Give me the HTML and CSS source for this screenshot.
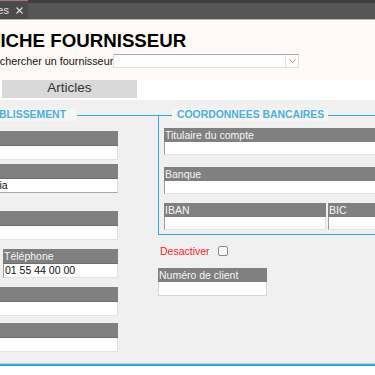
FILE: index.html
```html
<!DOCTYPE html>
<html lang="fr">
<head>
  <meta charset="UTF-8" />
  <title>Fiche fournisseur</title>
  <link rel="stylesheet" href="styles.css">
</head>
<body>

<div class="screen">
  <div class="tabbar">
    <div class="tab">
      <span class="tab-title">Fiches</span>
      <svg class="tab-close" width="7" height="7" viewBox="0 0 7 7"><path d="M0.5 0.5L6.5 6.5M6.5 0.5L0.5 6.5" stroke="#dcdcdc" stroke-width="1.2"/></svg>
    </div>
  </div>

  <div class="page">
    <header class="head">
      <h1>FICHE FOURNISSEUR</h1>
      <div class="search">
        <label for="supplier">Rechercher un fournisseur</label>
        <div class="select" id="supplier">
          <span class="select-arrow">
            <svg width="7" height="4" viewBox="0 0 7 4"><path d="M0.5 0.5L3.5 3.5L6.5 0.5" fill="none" stroke="#999" stroke-width="1"/></svg>
          </span>
        </div>
      </div>
    </header>

    <div class="tabs">
      <button class="tab-button">Articles</button>
    </div>

    <section class="panel">
      <fieldset class="box box-main">
        <legend>ETABLISSEMENT</legend>

        <div class="field">
          <div class="field-label">Code</div>
          <div class="field-input"></div>
        </div>
        <div class="field tight">
          <div class="field-label">Nom</div>
          <div class="field-input underline">SAS Groupe Nova Industria</div>
        </div>
        <div class="field spaced">
          <div class="field-label">Adresse</div>
          <div class="field-input"></div>
        </div>
        <div class="field split">
          <div>
            <div class="field-label">Fax</div>
            <div class="field-input"></div>
          </div>
          <div>
            <div class="field-label">Téléphone</div>
            <div class="field-input">01 55 44 00 00</div>
          </div>
        </div>
        <div class="field">
          <div class="field-label">Mail</div>
          <div class="field-input"></div>
        </div>
        <div class="field near">
          <div class="field-label">Site</div>
          <div class="field-input"></div>
        </div>
      </fieldset>

      <div class="side">
        <fieldset class="box box-bank">
          <legend>COORDONNEES BANCAIRES</legend>

          <div class="field">
            <div class="field-label">Titulaire du compte</div>
            <div class="field-input"></div>
          </div>
          <div class="field">
            <div class="field-label">Banque</div>
            <div class="field-input"></div>
          </div>
          <div class="field split">
            <div>
              <div class="field-label">IBAN</div>
              <div class="field-input"></div>
            </div>
            <div>
              <div class="field-label">BIC</div>
              <div class="field-input"></div>
            </div>
          </div>
        </fieldset>

        <div class="toggle">
          <label for="disable">Desactiver</label>
          <input type="checkbox" id="disable" />
        </div>

        <div class="field client">
          <div class="field-label">Numéro de client</div>
          <div class="field-input"></div>
        </div>
      </div>
    </section>
  </div>
</div>

</body>
</html>
```

FILE: styles.css
```css
body {
  margin: 0;
  font-family: "Liberation Sans", Arial, sans-serif;
  background: #fff;
}

.screen {
  width: 375px;
  overflow: hidden;
}

/* window tab strip */
.tabbar {
  height: 20px;
  box-sizing: border-box;
  background: linear-gradient(#3e3e3e 0 3px, #565656 3px);
  border-bottom: 1px solid #b4b4b4;
}

.tab {
  display: flex;
  align-items: center;
  justify-content: flex-end;
  gap: 7px;
  width: 88px;
  height: 19px;
  margin-left: -60px;
  padding-right: 5px;
  box-sizing: border-box;
  background: #4b4b4b;
  border-top: 1px solid #b0707a;
  overflow: hidden;
}

.tab-title {
  color: #e2e2e2;
  font-size: 11px;
  line-height: 13px;
  white-space: nowrap;
}

.tab-close {
  flex: none;
  margin-top: 1px;
}

.page {
  width: 540px;
  margin-left: -124px;
}

/* title block */
.head {
  height: 60px;
  box-sizing: border-box;
  padding: 10px 0 0 110px;
  background: #fffaf7;
}

h1 {
  margin: 0 0 0 3px;
  font-size: 18.7px;
  line-height: 22px;
  color: #000;
}

.search {
  display: flex;
  align-items: center;
  margin-top: 2px;
  font-size: 10.8px;
  line-height: 14px;
  color: #111;
}

.select {
  display: flex;
  justify-content: flex-end;
  width: 186px;
  height: 14px;
  box-sizing: border-box;
  background: #fff;
  border: 1px solid #dedede;
  border-top-color: #a9a9a9;
}

.select-arrow {
  display: flex;
  align-items: center;
  justify-content: center;
  width: 12px;
  border-left: 1px solid #e4e4e4;
}

.tabs {
  height: 20px;
  padding-left: 126px;
  background: #fff;
}

.tab-button {
  display: block;
  width: 135px;
  height: 18px;
  padding: 0 0 2px;
  border: none;
  background: #d9d9d9;
  font-family: inherit;
  font-size: 13.5px;
  line-height: 16px;
  color: #333;
}

/* main form panel */
.panel {
  display: grid;
  grid-template-columns: 282px 1fr;
  align-items: start;
  padding: 9px 0 12px;
  background: #f0f0f0;
  border-bottom: 2px solid #2ba7db;
  box-shadow: inset 0 -1px 0 #cfcfcf;
}

.box {
  margin: 0;
  min-width: 0;
  padding: 0;
  border: 0;
}

.box legend {
  padding: 0;
  background: #f6f6f6;
  color: #4cb1d7;
  font-size: 10.4px;
  font-weight: bold;
  line-height: 12px;
}

.box-main {
  padding-top: 10px;
  border-top: 1px solid #36a9dc;
}

.box-main legend {
  margin-left: 99px;
  padding: 0 11px 0 4px;
}

.box-bank {
  padding: 7px 0 4px 5px;
  border: 1px solid #36a9dc;
}

.box-bank legend {
  margin-left: 8px;
  padding: 0 4px 0 5px;
}

.field-label {
  height: 15px;
  box-sizing: border-box;
  padding-left: 1px;
  background: #808080;
  border-bottom: 1px solid #6e6e6e;
  color: #f6f6f6;
  font-size: 10.5px;
  line-height: 14px;
  white-space: nowrap;
  overflow: hidden;
}

.field-input {
  height: 14px;
  box-sizing: border-box;
  padding-left: 1px;
  background: #fff;
  border: 1px solid #e2e2e2;
  border-top: 0;
  color: #111;
  font-size: 10.5px;
  line-height: 13px;
  white-space: nowrap;
  overflow: hidden;
}

.field-input.underline {
  border-bottom-color: #a8a8a8;
}

.box-main .field {
  margin-right: 40px;
}

.box-main .field + .field {
  margin-top: 9px;
}

.box-main .field.tight {
  margin-top: 4px;
}

.box-main .field.spaced {
  margin-top: 18px;
}

.box-main .field.near {
  margin-top: 7px;
}

.field.split {
  display: grid;
  grid-template-columns: 122px 1fr;
  gap: 5px;
}

.split .field-input {
  border-left-color: #a0a0a0;
}

.box-bank .field + .field {
  margin-top: 12px;
}

.box-bank .field.split {
  grid-template-columns: 162px 1fr;
  gap: 2px;
  margin-top: 9px;
}

.box-bank .field-label {
  height: 14px;
  border-bottom: 0;
}

.box-bank .field-input {
  height: 13px;
  border-left-color: #9c9c9c;
}

.toggle {
  display: flex;
  align-items: center;
  gap: 8px;
  margin-top: 9px;
  padding-left: 2px;
  color: #f22;
  font-size: 10.5px;
  line-height: 14px;
}

.toggle input {
  appearance: none;
  width: 10px;
  height: 10px;
  margin: 0;
  background: #f7f7f7;
  border: 1px solid #8a8a8a;
  border-radius: 2px;
}

.field.client {
  width: 109px;
  margin-top: 10px;
}

.client .field-label {
  height: 14px;
  border-bottom: 0;
}

.client .field-input {
  border-color: #d8d8d8;
}
```
